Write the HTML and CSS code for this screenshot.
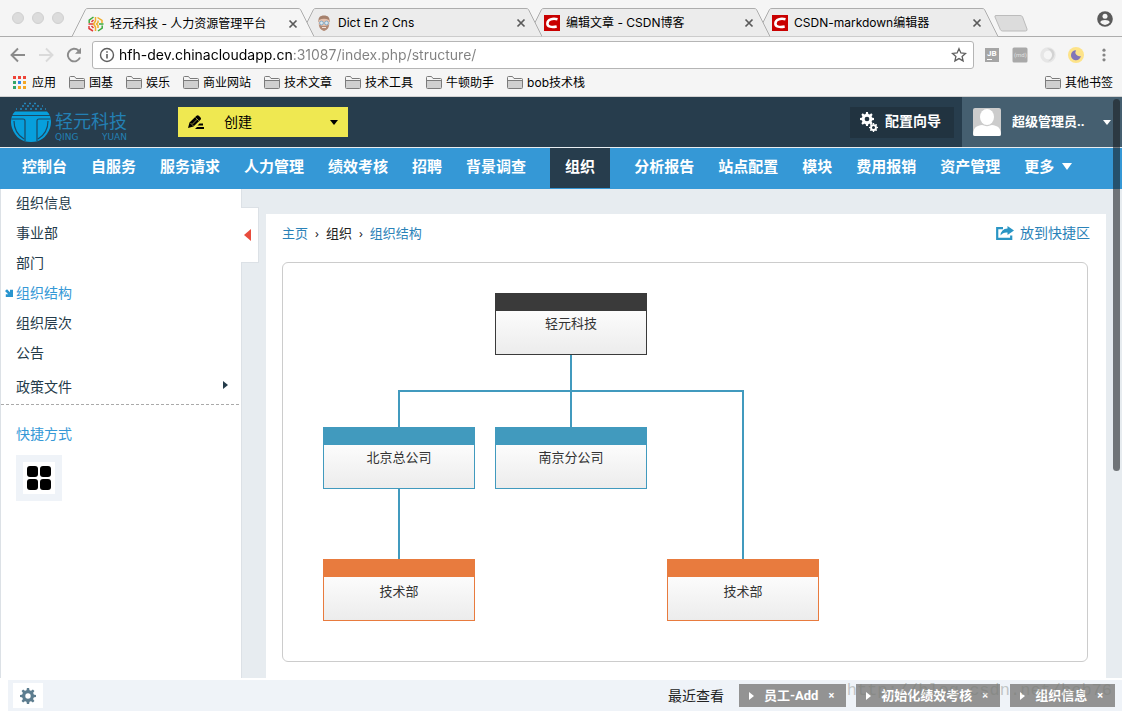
FILE: index.html
```
<!DOCTYPE html>
<html lang="zh-CN">
<head>
<meta charset="utf-8">
<meta name="viewport" content="width=device-width, initial-scale=1">
<title>轻元科技 - 人力资源管理平台</title>
<link rel="stylesheet" href="styles.css">
</head>
<body>
<svg class="defs" aria-hidden="true">
  <symbol id="tab-shape" viewBox="0 0 242 29" preserveAspectRatio="none">
    <path d="M0 28.5L13.500 1.500Q14 .5 16 .5H226Q228 .5 228.500 1.500L242 28.500" vector-effect="non-scaling-stroke"/>
  </symbol>
  <symbol id="close" viewBox="0 0 10 10"><path d="M1.500 1.500l7 7M8.500 1.500l-7 7" fill="none" stroke="#5a5a5a" stroke-width="1.700"/></symbol>
  <symbol id="csdn" viewBox="0 0 16 16"><path fill="#c90000" d="M0 0h16v16H0z"/><path d="M13.500 4.300C8.500 3 3.700 4.500 3.400 8.300c-.2 3.500 4.300 4.300 9.300 3.200" fill="none" stroke="#fff" stroke-width="2.600"/></symbol>
  <symbol id="folder" viewBox="0 0 16 13"><path d="M.5 11.500v-10q0-1 1-1h4l1.500 2h7.500q1 0 1 1v8q0 1-1 1h-13q-1 0-1-1z" fill="#f5f5f5" stroke="#7b7b7b"/><path d="M1 4.500h14V12H1z" fill="#cfcfcf"/><path d="M1 4.500h14" stroke="#7b7b7b"/></symbol>
  <symbol id="cog" viewBox="0 0 16 16"><g fill="currentColor"><path fill-rule="evenodd" d="M8 2a6 6 0 1 1 0 12A6 6 0 0 1 8 2zm0 3.300a2.700 2.700 0 1 0 0 5.400 2.700 2.700 0 0 0 0-5.400z"/><path id="tooth" d="M6.400 3L6.900 0h2.200l.5 3zM6.400 13l.5 3h2.200l.5-3z"/><use href="#tooth" transform="rotate(45 8 8)"/><use href="#tooth" transform="rotate(90 8 8)"/><use href="#tooth" transform="rotate(135 8 8)"/></g></symbol>
</svg>

<header class="browser">
  <div class="tabstrip">
    <div class="lights"><i></i><i></i><i></i></div>
    <div class="tabs" role="tablist">
      <div class="tab tab-active" role="tab" aria-selected="true">
        <svg class="tab-bg"><use href="#tab-shape"/></svg>
        <svg class="fav" viewBox="0 0 16 16" fill="none" stroke-width="1.500"><path d="M5.500 1L1.200 4.200V7" stroke="#3daa3d"/><path d="M.5 8H5M1 10v2.500L5 15" stroke="#e23b3b"/><path d="M5.500 4L3.500 6M5.500 12l-2-2" stroke="#e23b3b"/><path d="M7.500 1v4L5.500 8l2 3v4M9.500 1.500l4.500 3V7" stroke="#f0ad2c"/><path d="M10 4.500v2L8.500 8l1.500 1.500V12" stroke="#f0ad2c"/><path d="M15.500 8H11M14.200 9.500V12L10 15" stroke="#3daa3d"/></svg>
        <span class="tab-title">轻元科技 - 人力资源管理平台</span>
        <button class="tab-close" aria-label="关闭"><svg viewBox="0 0 10 10"><use href="#close"/></svg></button>
      </div>
      <div class="tab" role="tab">
        <svg class="tab-bg"><use href="#tab-shape"/></svg>
        <svg class="fav" viewBox="0 0 16 16"><path d="M2.500 7C2 2.500 4 .5 8 .5S14 2.500 13.500 7z" fill="#a5806c"/><path d="M3 5q5-2.500 10 0l.5 4q-.5 5-5.500 7-5-2-5.500-7z" fill="#e6c0ab"/><path d="M3 9.500q5 3 10 0-.2 5-5 6.500-4.800-1.500-5-6.500z" fill="#b08a76"/><g fill="#d9e8f1" stroke="#86abc6"><circle cx="5.500" cy="8" r="1.900"/><circle cx="10.500" cy="8" r="1.900"/></g><path d="M6 12.500h4" stroke="#f3e1d8"/></svg>
        <span class="tab-title">Dict En 2 Cns</span>
        <button class="tab-close" aria-label="关闭"><svg viewBox="0 0 10 10"><use href="#close"/></svg></button>
      </div>
      <div class="tab" role="tab">
        <svg class="tab-bg"><use href="#tab-shape"/></svg>
        <svg class="fav" viewBox="0 0 16 16"><use href="#csdn"/></svg>
        <span class="tab-title">编辑文章 - CSDN博客</span>
        <button class="tab-close" aria-label="关闭"><svg viewBox="0 0 10 10"><use href="#close"/></svg></button>
      </div>
      <div class="tab" role="tab">
        <svg class="tab-bg"><use href="#tab-shape"/></svg>
        <svg class="fav" viewBox="0 0 16 16"><use href="#csdn"/></svg>
        <span class="tab-title">CSDN-markdown编辑器</span>
        <button class="tab-close" aria-label="关闭"><svg viewBox="0 0 10 10"><use href="#close"/></svg></button>
      </div>
    </div>
    <button class="new-tab" aria-label="新标签页"><svg viewBox="0 0 34 17"><path d="M2 .5h24q2 0 2.600 1.500L33 14q.5 2-1.500 2H8.500Q7 16 6.300 14.500L1 2Q.5 .5 2 .5z" fill="#dcdcdc" stroke="#bcbcbc"/></svg></button>
    <button class="profile" aria-label="用户"><svg viewBox="0 0 16 16"><circle cx="8" cy="8" r="7.800" fill="#5a5a5a"/><circle cx="8" cy="5.300" r="2.500" fill="#f5f5f5"/><path d="M3.200 11.300Q4 9 8 9t4.800 2.300Q11 14 8 14t-4.800-2.700z" fill="#f5f5f5"/></svg></button>
  </div>

  <div class="toolbar">
    <button class="nav-btn" aria-label="后退"><svg viewBox="0 0 16 16"><path d="M15 8H2.500M8 1.500L1.500 8 8 14.500" fill="none" stroke="#8b8b8b" stroke-width="1.900"/></svg></button>
    <button class="nav-btn" aria-label="前进"><svg viewBox="0 0 16 16"><path d="M1 8h12.500M8 1.500L14.500 8 8 14.500" fill="none" stroke="#dadada" stroke-width="1.900"/></svg></button>
    <button class="nav-btn" aria-label="刷新"><svg viewBox="0 0 16 16"><path d="M14 10.500A6.300 6.300 0 1 1 12.500 3.500L14 5" fill="none" stroke="#8b8b8b" stroke-width="1.900"/><path d="M15 .8v6H9z" fill="#8b8b8b"/></svg></button>
    <div class="address">
      <svg class="info" viewBox="0 0 16 16"><circle cx="8" cy="8" r="6.500" fill="none" stroke="#5f5f5f" stroke-width="1.400"/><path d="M8 7v4.500M8 4.200v1.600" stroke="#5f5f5f" stroke-width="1.600"/></svg>
      <input class="url" type="text" aria-label="地址" value="hfh-dev.chinacloudapp.cn:31087/index.php/structure/">
      <button class="star" aria-label="收藏"><svg viewBox="0 0 16 16"><path d="M8 1.700l1.900 4.200 4.600.5-3.400 3 1 4.500L8 11.600l-4.100 2.300 1-4.500-3.400-3 4.600-.5z" fill="none" stroke="#5f5f5f" stroke-width="1.300"/></svg></button>
    </div>
    <div class="extensions">
      <svg viewBox="0 0 16 16"><path fill="#a5a5a5" d="M1 1h14v14H1z"/><text class="ext-jb" x="3" y="9">JB</text><path fill="#fff" d="M3 12h5v1H3z"/></svg>
      <svg viewBox="0 0 16 16"><rect x=".5" y=".5" width="15" height="15" rx="1.500" fill="#a9a9a9"/><text class="ext-md" x="2" y="10">(md)</text></svg>
      <svg viewBox="0 0 16 16" fill="none"><circle cx="8" cy="8" r="6" stroke="#e6e6e6" stroke-width="3.500"/><path d="M7 1.500q7-1 7.500 6-1 6-7 7 5-3 4.500-7.500Q11 3 7 1.500z" fill="#d3d3d3"/></svg>
      <svg viewBox="0 0 16 16"><circle cx="8" cy="8" r="8" fill="#fde389"/><path d="M8 3.200A5 5 0 1 0 12.900 9 4 4 0 0 1 8 3.200z" fill="#8375b8"/></svg>
      <svg viewBox="0 0 16 16" fill="#858585"><circle cx="8" cy="3.200" r="1.600"/><circle cx="8" cy="8" r="1.600"/><circle cx="8" cy="12.800" r="1.600"/></svg>
    </div>
  </div>

  <nav class="bookmarks" aria-label="书签">
    <a href="#" class="apps"><svg viewBox="0 0 13 13"><path fill="#ee4438" d="M0 0h3v3H0zM5 0h3v3H5zM10 0h3v3h-3z"/><path fill="#34a56a" d="M0 5h3v3H0zM0 10h3v3H0z"/><path fill="#2f87e8" d="M5 5h3v3H5z"/><path fill="#f5a623" d="M10 5h3v3h-3zM5 10h3v3H5zM10 10h3v3h-3z"/></svg>应用</a>
    <a href="#"><svg viewBox="0 0 16 13"><use href="#folder"/></svg>国基</a>
    <a href="#"><svg viewBox="0 0 16 13"><use href="#folder"/></svg>娱乐</a>
    <a href="#"><svg viewBox="0 0 16 13"><use href="#folder"/></svg>商业网站</a>
    <a href="#"><svg viewBox="0 0 16 13"><use href="#folder"/></svg>技术文章</a>
    <a href="#"><svg viewBox="0 0 16 13"><use href="#folder"/></svg>技术工具</a>
    <a href="#"><svg viewBox="0 0 16 13"><use href="#folder"/></svg>牛顿助手</a>
    <a href="#"><svg viewBox="0 0 16 13"><use href="#folder"/></svg>bob技术栈</a>
    <a href="#" class="other"><svg viewBox="0 0 16 13"><use href="#folder"/></svg>其他书签</a>
  </nav>
</header>

<div class="app">
  <header class="topbar">
    <a href="#" class="logo">
      <svg viewBox="0 0 42 42"><g fill="none" stroke="#2388bd" stroke-width="1.500" stroke-dasharray="2 3"><path d="M14 2.500h14"/><path d="M9 5h24" stroke-dashoffset="2"/><path d="M6 8h30" stroke-dashoffset="1"/></g><path d="M5 10.500h32q2 1.500 3 4.500 2 6 0 12-5 14-19 14T2 27q-2-6 0-12 1-3 3-4.500z" fill="#079fdc"/><path d="M2 14.500h38M1.500 18H13q2 0 2 2v20M40.500 18H29q-2 0-2 2v20M4 20q0 12 10 18M38 20q0 12-10 18" fill="none" stroke="#1b4a66" stroke-width="1.200"/></svg>
      <span class="logo-text"><span class="logo-name">轻元科技</span><span class="logo-sub"><span>QING</span><span>YUAN</span></span></span>
    </a>
    <button class="create">
      <svg class="pencil" viewBox="0 0 16 14"><path d="M0 13L1.500 7.500 8.500 .8q1.200-1 2.300 0l1.700 1.700q1 1.200 0 2.300L5.500 11.500zM9 12h7v2H7zM11.500 8.500H15v2H9.500z"/><path d="M2.500 8l3 3M7.500 2.500l3.300 3.300M4.500 9L9.500 4" stroke="#efe851" stroke-width=".6"/></svg>
      <span>创建</span>
      <i class="caret"></i>
    </button>
    <button class="wizard">
      <svg viewBox="0 0 20 22"><use href="#cog" width="14" height="14" x="1" y="1"/><use href="#cog" width="9" height="9" x="10" y="12"/></svg>
      <span>配置向导</span>
    </button>
    <button class="user">
      <svg class="avatar" viewBox="0 0 28 28"><path fill="#ccc" d="M0 0h28v28H0z"/><ellipse cx="14" cy="9" rx="7" ry="8" fill="#fff"/><path d="M0 28q0-9 5-10 4-1.500 6-.5 3 1.500 6 0 2-1 6 .5 5 1 5 10z" fill="#fff"/></svg>
      <span>超级管理员..</span>
      <i class="caret"></i>
    </button>
  </header>

  <nav class="mainnav" aria-label="主导航">
    <a href="#">控制台</a><a href="#">自服务</a><a href="#">服务请求</a><a href="#">人力管理</a><a href="#">绩效考核</a><a href="#">招聘</a><a href="#">背景调查</a><a href="#" class="current">组织</a><a href="#">分析报告</a><a href="#">站点配置</a><a href="#">模块</a><a href="#">费用报销</a><a href="#">资产管理</a><a href="#" class="more">更多<i class="caret"></i></a>
  </nav>

  <div class="workspace">
    <aside class="sidebar">
      <ul class="menu">
        <li><a href="#">组织信息</a></li>
        <li><a href="#">事业部</a></li>
        <li><a href="#">部门</a></li>
        <li><a href="#" class="selected"><svg class="pointer" viewBox="0 0 8 8"><path d="M0 2L2 .3l3 2.900V.8h3V8H.8V5.200h2.400z"/></svg>组织结构</a></li>
        <li><a href="#">组织层次</a></li>
        <li><a href="#">公告</a></li>
      </ul>
      <button class="policy">政策文件<i class="arrow"></i></button>
      <h2 class="shortcut-title">快捷方式</h2>
      <button class="shortcut" aria-label="组织结构"><svg viewBox="0 0 24 24"><rect width="11" height="11" rx="3"/><rect x="13" width="11" height="11" rx="3"/><rect y="13" width="11" height="11" rx="3"/><rect x="13" y="13" width="11" height="11" rx="3"/></svg></button>
      <button class="collapse" aria-label="收起"></button>
    </aside>

    <main class="content">
      <div class="content-head">
        <nav class="crumbs" aria-label="面包屑"><a href="#">主页</a><span>›</span><span>组织</span><span>›</span><a href="#">组织结构</a></nav>
        <a href="#" class="pin"><svg viewBox="0 0 18 14"><path d="M7 2.200H1.200v10.600h14V9.500" fill="none" stroke="currentColor" stroke-width="2.200"/><path d="M11.500 0L18 4.500 11.500 9V6.500Q7 6 4.500 9.500 5 3 11.500 2.600z" fill="currentColor"/></svg>放到快捷区</a>
      </div>
      <section class="chart">
        <svg class="links" viewBox="0 0 540 380" fill="none" stroke="#419abe" stroke-width="2"><path d="M288 92v72M116 164v-36h344v168M116 226v70"/></svg>
        <div class="node company root">轻元科技</div>
        <div class="node branch beijing">北京总公司</div>
        <div class="node branch nanjing">南京分公司</div>
        <div class="node dept dept-left">技术部</div>
        <div class="node dept dept-right">技术部</div>
      </section>
    </main>
  </div>

  <footer class="dock">
    <button class="settings" aria-label="设置"><svg viewBox="0 0 16 16"><use href="#cog"/></svg></button>
    <span class="recent-label">最近查看</span>
    <div class="recent"><i class="arrow"></i><a href="#">员工-Add</a><button aria-label="移除">×</button></div>
    <div class="recent"><i class="arrow"></i><a href="#">初始化绩效考核</a><button aria-label="移除">×</button></div>
    <div class="recent"><i class="arrow"></i><a href="#">组织信息</a><button aria-label="移除">×</button></div>
    <span class="watermark">http://blog.csdn.net/bob76</span>
  </footer>
  <div class="scroll-thumb"></div>
</div>
</body>
</html>
```
FILE: styles.css
```
* { box-sizing: border-box; }
body {
  margin: 0;
  min-height: 100vh;
  display: flex;
  flex-direction: column;
  background: #fff;
  color: #243b4a;
  font: 14px/20px "Open Sans", "Noto Sans CJK SC", sans-serif;
}
a { color: inherit; text-decoration: none; }
button { border: 0; padding: 0; background: none; font: inherit; color: inherit; display: flex; align-items: center; }
svg { display: block; flex: none; }
.defs { position: absolute; width: 0; height: 0; }
.caret { border: 4px solid transparent; border-top: 5px solid currentColor; border-bottom: 0; }
.arrow { border: 4px solid transparent; border-left: 5px solid currentColor; border-right: 0; }

/* Browser frame */
.browser {
  background: #f5f5f5;
  border-bottom: 1px solid #d2d2d2;
  color: #000;
  font: 12px/16px Inter, "Noto Sans CJK SC", sans-serif;
}
.tabstrip { display: flex; align-items: flex-end; height: 37px; border-bottom: 1px solid #adadad; }
.lights { display: flex; flex: none; gap: 8px; width: 72px; padding-left: 12px; align-self: center; }
.lights i { width: 12px; height: 12px; border: 1px solid #d0d0d0; border-radius: 50%; background: #dcdcdc; }
.tabs { display: flex; flex: 0 1 926px; min-width: 0; }
.tab { position: relative; display: flex; flex: 0 1 242px; min-width: 0; align-items: center; height: 29px; padding: 2px 16px 0; margin-bottom: -1px; z-index: 1; border-bottom: 1px solid #adadad; }
.tab + .tab { margin-left: -14px; z-index: 0; }
.tab:nth-child(1) { z-index: 4; }
.tab:nth-child(2) { z-index: 3; }
.tab:nth-child(3) { z-index: 2; }
.tab-bg { position: absolute; left: 0; top: 0; width: 100%; height: 29px; fill: #ececec; stroke: #adadad; z-index: -1; }
.tab-active { border-bottom: 0; }
.tab-active .tab-bg { fill: #f5f5f5; }
.fav { width: 16px; height: 16px; margin-right: 6px; }
.tab-title { flex: 1; overflow: hidden; white-space: nowrap; }
.tab-close svg { width: 10px; height: 10px; }
.new-tab { margin: 0 0 4px -4px; }
.new-tab svg { width: 34px; height: 17px; }
.profile { margin: 0 9px 9px auto; }
.profile svg { width: 16px; height: 16px; }

.toolbar { display: flex; align-items: center; gap: 12px; padding: 4px 10px 2px; }
.nav-btn svg { width: 16px; height: 16px; }
.address { flex: 1; display: flex; align-items: center; height: 28px; margin: 0 -2px; padding: 0 6px; border: 1px solid #b5b5b5; border-radius: 3px; background: #fff; }
.info { width: 16px; height: 16px; }
.url {
  flex: 1;
  min-width: 0;
  height: 24px;
  padding: 0 0 0 4px;
  border: 0;
  outline: 0;
  color: #000;
  font: 14px/24px Inter, "Noto Sans CJK SC", sans-serif;
  background: linear-gradient(90deg, #000 178px, #808080 178px);
  -webkit-background-clip: text;
  background-clip: text;
  -webkit-text-fill-color: transparent;
}
.star svg { width: 16px; height: 16px; }
.extensions { display: flex; gap: 12px; }
.extensions svg { width: 16px; height: 16px; }
.ext-jb { font: bold 8px Roboto, sans-serif; fill: #fff; }
.ext-md { font: 6px Roboto, sans-serif; fill: #e0e0e0; }

.bookmarks { display: flex; align-items: center; gap: 13px; height: 25px; padding: 0 9px 2px 13px; white-space: nowrap; }
.bookmarks a { display: flex; align-items: center; gap: 4px; }
.bookmarks svg { width: 16px; height: 13px; }
.bookmarks .apps { gap: 6px; }
.bookmarks .apps svg { width: 13px; }
.bookmarks .other { margin-left: auto; }

/* Application */
.app { position: relative; flex: 1; display: flex; flex-direction: column; }
.topbar { display: flex; align-items: center; height: 51px; background: #273d4d; border-bottom: 1px solid #e8edf1; color: #fff; }
.logo { display: flex; width: 168px; margin: 0 0 0 10px; gap: 3px; color: #2380b4; }
.logo > svg { width: 42px; height: 42px; }
.logo-text { display: flex; flex-direction: column; justify-content: flex-end; width: 72px; }
.logo-name { font-size: 18px; line-height: 20px; }
.logo-sub { display: flex; justify-content: space-between; font: 9px/12px "DejaVu Sans", sans-serif; }
.create { width: 170px; height: 30px; padding: 0 10px; background: #efe851; color: #000; }
.create .caret { margin-left: auto; }
.pencil { width: 16px; height: 14px; margin-right: 20px; }
.wizard { gap: 6px; height: 31px; margin-left: auto; padding: 0 13px 0 9px; background: #213340; font-weight: 700; }
.wizard svg { width: 20px; height: 22px; }
.wizard span { padding-bottom: 3px; }
.user { gap: 11px; width: 160px; height: 50px; margin-left: 8px; padding: 0 11px; background: #455f70; font-size: 13px; font-weight: 700; }
.user span { padding-bottom: 2px; }
.user .caret { margin-left: auto; }
.avatar { width: 28px; height: 28px; border-radius: 2px; }

.mainnav { display: flex; gap: 24px; height: 41px; padding: 0 22px; background: #3598d6; color: #fff; font-size: 15px; font-weight: 700; white-space: nowrap; }
.mainnav a { height: 40px; line-height: 36px; }
.mainnav .current { padding: 0 15px; background: #273d4d; }
.mainnav .more { display: flex; gap: 8px; }
.more .caret { margin-top: 15px; border-width: 7px 5px 0; }

.workspace { flex: 1; display: flex; background: #e7ecf0; }
.sidebar { position: relative; width: 242px; flex: none; border: 1px solid #dce1e6; border-width: 0 1px; background: #fff; }
.menu { list-style: none; margin: 0; padding: 0; }
.menu li { height: 30px; padding: 4px 0 0 15px; }
.menu a { position: relative; display: block; }
.menu .selected { color: #3598d6; }
.pointer { position: absolute; left: -11px; top: 6px; width: 8px; height: 8px; fill: #2a95cf; }
.policy { width: 238px; height: 36px; justify-content: space-between; padding: 0 11px 0 15px; border-bottom: 1px dashed #aaa; }
.policy .arrow { margin-bottom: 4px; }
.shortcut-title { margin: 19px 0 11px 15px; color: #3598d6; font-size: 14px; font-weight: 400; }
.shortcut { width: 46px; height: 46px; margin-left: 15px; justify-content: center; border: 7px solid #eff3f8; background: #fff; }
.shortcut svg { width: 24px; height: 24px; }
.collapse { position: absolute; left: 240px; top: 18px; width: 18px; height: 56px; padding-left: 3px; border: 1px solid #dce1e6; border-left: 0; background: #fff; }
.collapse::before { content: ""; border: 6px solid transparent; border-right: 7px solid #e84c3d; border-left: 0; }

.content { flex: 1; min-width: 0; margin: 25px 16px 0 24px; padding: 9px 18px 16px 16px; background: #fff; }
.content-head { display: flex; align-items: center; justify-content: space-between; margin-bottom: 19px; color: #2a82b8; }
.crumbs { display: flex; gap: 7px; font-size: 13px; }
.crumbs span { color: #222; }
.pin { display: flex; align-items: center; gap: 6px; margin-right: -2px; }
.pin svg { width: 18px; height: 14px; color: #2a95c4; }

.chart { position: relative; min-height: 400px; border: 1px solid #ccc; border-radius: 6px; overflow: auto; }
.links { position: absolute; left: 0; top: 0; width: 540px; height: 380px; }
.node { position: absolute; width: 152px; height: 62px; padding-top: 2px; border: 1px solid; border-top-width: 18px; background: linear-gradient(#fcfcfc, #ececec); color: #333; font-size: 13px; text-align: center; }
.company { border-color: #3a3a3a; }
.branch { border-color: #419abe; }
.dept { padding-top: 4px; border-color: #e87b3e; }
.root { left: 212px; top: 30px; }
.beijing { left: 40px; top: 164px; }
.nanjing { left: 212px; top: 164px; }
.dept-left { left: 40px; top: 296px; }
.dept-right { left: 384px; top: 296px; }

.dock { position: relative; display: flex; align-items: center; gap: 10px; height: 31px; margin: 2px 0 0 8px; padding: 0 7px 0 5px; background: #eff3f8; }
.settings { width: 30px; height: 25px; margin-right: auto; justify-content: center; background: #fff; color: #5d7d8f; }
.settings svg { width: 16px; height: 16px; }
.recent-label { margin-right: 5px; color: #222; }
.recent { display: flex; align-items: center; height: 23px; padding: 0 12px 0 10px; background: #939393; color: #fff; font: bold 13px/20px Roboto, "Noto Sans CJK SC", sans-serif; white-space: nowrap; }
.recent a { margin: 0 10px; }
.recent button { font-size: 11px; }
.watermark { position: absolute; right: 10px; top: 0; color: rgba(120, 125, 115, .4); font: 17px/22px "Liberation Mono", monospace; pointer-events: none; }
.scroll-thumb { position: absolute; right: 2px; top: 2px; width: 7px; height: 372px; border-radius: 4px; background: rgba(25, 30, 33, .58); }
```
